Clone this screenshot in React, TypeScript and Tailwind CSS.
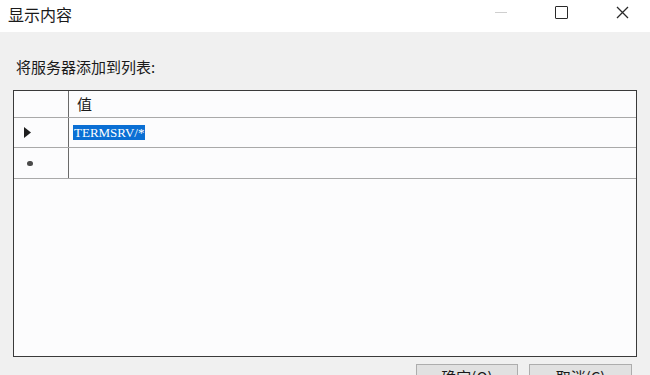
export default function App() {
  return (
    <div className="w-[650px] h-[375px] overflow-hidden bg-[#f0f0f0] flex flex-col text-[#1a1a1a] font-['Noto_Sans_CJK_SC','Noto_Sans',sans-serif]">
      {/* title bar */}
      <div className="h-[32px] shrink-0 bg-white flex items-start">
        <span className="ml-[8px] mt-[3px] text-[16px] leading-[22px]">显示内容</span>
        <div className="ml-auto flex items-start">
          <div className="w-[60px] h-[24px] flex items-center justify-center">
            <div className="w-[12px] h-px bg-[#cfcfcf]" />
          </div>
          <div className="w-[60px] h-[24px] flex items-center justify-center">
            <div className="w-[13px] h-[13px] border-[1.5px] border-[#2a2a2a] rounded-[1px]" />
          </div>
          <div className="w-[62px] h-[24px] flex items-center justify-center mr-[-3px]">
            <svg width="13" height="13" viewBox="0 0 13 13">
              <path d="M1 1 L12 12 M12 1 L1 12" stroke="#2a2a2a" strokeWidth="1.3" fill="none" />
            </svg>
          </div>
        </div>
      </div>

      {/* body */}
      <div className="flex-1 min-h-0 flex flex-col px-[13px]">
        <div className="mt-[25px] ml-[3px] h-[20px] text-[15px] leading-[20px]">将服务器添加到列表:</div>

        <div className="mt-[13px] w-[624px] h-[267px] shrink-0 border border-[#3a3a3a] bg-[#fcfcfd]">
          <div className="h-[27px] flex border-b border-[#a9a9a9]">
            <div className="w-[55px] border-r border-[#6a6a6a]" />
            <div className="pl-[8px] text-[15px] leading-[26px]">值</div>
          </div>
          <div className="h-[30px] flex border-b border-[#a9a9a9]">
            <div className="w-[55px] border-r border-[#6a6a6a] flex items-center pl-[10px]">
              <svg width="7" height="11" viewBox="0 0 7 11">
                <path d="M0 0 L7 5.5 L0 11 Z" fill="#1e1e1e" />
              </svg>
            </div>
            <div className="pl-[4px] flex items-center">
              <span className="bg-[#0a6fd4] text-white px-px h-[15px] leading-[15px] text-[13px] font-['Liberation_Serif',serif]">TERMSRV/*</span>
            </div>
          </div>
          <div className="h-[31px] flex border-b border-[#a9a9a9]">
            <div className="w-[55px] border-r border-[#6a6a6a] flex items-center pl-[13px]">
              <div className="w-[6px] h-[5px] rounded-full bg-[#4a4a4a]" />
            </div>
            <div />
          </div>
        </div>

        <div className="mt-[7px] flex justify-end gap-[11px] pr-[5px]">
          <div className="w-[102px] h-[26px] border border-[#adadad] bg-[#e1e1e1] flex items-center justify-center text-[15px]">确定(O)</div>
          <div className="w-[103px] h-[26px] border border-[#adadad] bg-[#e1e1e1] flex items-center justify-center text-[15px]">取消(C)</div>
        </div>
      </div>
    </div>
  );
}
